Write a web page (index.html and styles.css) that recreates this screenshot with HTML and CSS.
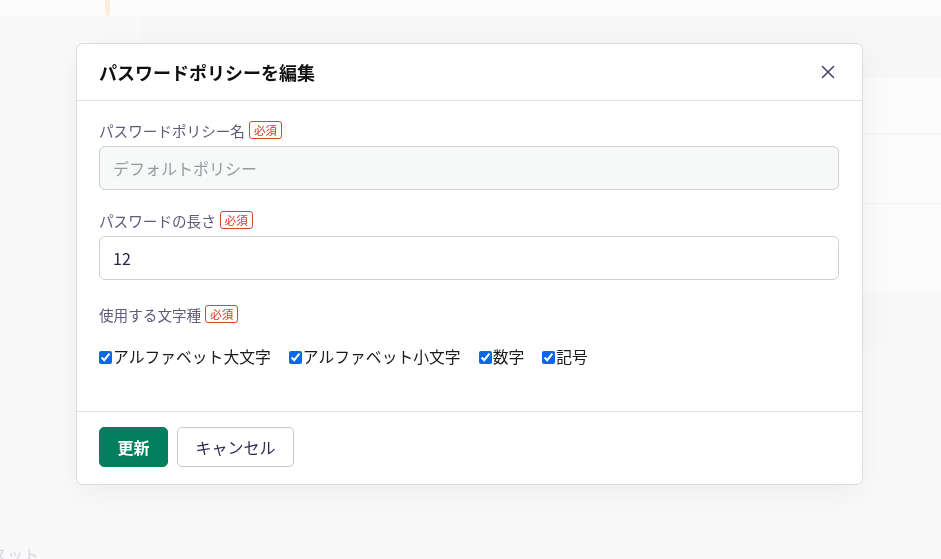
FILE: index.html
```html
<!DOCTYPE html>
<html lang="ja">
<head>
    <meta charset="UTF-8">
    <meta name="viewport" content="width=device-width, initial-scale=1.0">
    <title>パスワードポリシーを編集</title>
    <link rel="stylesheet" href="styles.css">
</head>
<body>
    <div class="page">
        <div class="notice"><span class="notice-bar"></span></div>
        <div class="table">
            <div class="table-head"></div>
            <div class="table-row"></div>
            <div class="table-row"></div>
            <div class="table-row tall"></div>
            <div class="table-foot"></div>
        </div>
        <div class="side-link"><span>スット</span></div>
    </div>

    <div class="overlay">
        <div class="modal">
            <div class="modal-header">
                <h2>パスワードポリシーを編集</h2>
                <button class="close" aria-label="閉じる">
                    <svg width="14" height="14" viewBox="0 0 14 14">
                        <path d="M1.5 1.5 L12.5 12.5 M12.5 1.5 L1.5 12.5" stroke="#4a4870" stroke-width="1.6" stroke-linecap="round"/>
                    </svg>
                </button>
            </div>

            <div class="modal-body">
                <div class="field">
                    <label class="field-label" for="name">パスワードポリシー名<span class="required">必須</span></label>
                    <input type="text" id="name" class="input" placeholder="デフォルトポリシー" disabled>
                </div>

                <div class="field">
                    <label class="field-label" for="length">パスワードの長さ<span class="required">必須</span></label>
                    <input type="text" id="length" class="input" value="12">
                </div>

                <div class="field last">
                    <div class="field-label">使用する文字種<span class="required">必須</span></div>
                    <div class="checks">
                        <label class="check"><input type="checkbox" checked>アルファベット大文字</label>
                        <label class="check"><input type="checkbox" checked>アルファベット小文字</label>
                        <label class="check"><input type="checkbox" checked>数字</label>
                        <label class="check"><input type="checkbox" checked>記号</label>
                    </div>
                </div>
            </div>

            <div class="modal-footer">
                <button class="btn btn-primary">更新</button>
                <button class="btn btn-secondary">キャンセル</button>
            </div>
        </div>
    </div>
</body>
</html>
```

FILE: styles.css
```css
body {
    font-family: "Noto Sans CJK JP", "Noto Sans", sans-serif;
    background-color: #fafafa;
    color: #1a1a1a;
    margin: 0;
    padding: 0;
    overflow: hidden;
}
.page {
    height: 559px;
    display: flex;
    flex-direction: column;
}
.notice {
    height: 16px;
    background: #fefefe;
    padding-left: 105px;
    display: flex;
}
.notice-bar {
    width: 5px;
    background: #fdebcf;
    border-radius: 0 0 3px 3px;
}
.table {
    margin-left: 140px;
    display: flex;
    flex-direction: column;
}
.table-head {
    height: 62px;
    background: #f7f7f7;
}
.table-row {
    height: 55px;
    background: #fcfcfc;
    border-bottom: 1px solid #f1f1f1;
}
.table-row + .table-row {
    height: 69px;
}
.table-row.tall {
    height: 87px;
    border-bottom: none;
}
.table-foot {
    height: 60px;
    background: #f8f8f8;
}
.side-link {
    margin-top: auto;
    height: 16px;
    overflow: hidden;
    font-size: 16px;
    line-height: 22px;
    color: #cdc9dc;
}
.side-link span {
    display: block;
    margin-left: -9px;
}
.overlay {
    position: fixed;
    inset: 0;
    background: rgba(250, 250, 250, 0.3);
    padding: 43px 0 0 76px;
}
.modal {
    width: 785px;
    background: #ffffff;
    border: 1px solid #dcdce0;
    border-radius: 7px;
    box-shadow: 0 8px 32px rgba(0, 0, 0, 0.05);
}
.modal-header {
    height: 56px;
    display: flex;
    align-items: center;
    justify-content: space-between;
    padding: 0 22px;
    border-bottom: 1px solid #e2e2e8;
}
.modal-header h2 {
    margin: 0;
    font-size: 18px;
    font-weight: bold;
    color: #111;
}
.close {
    background: none;
    border: none;
    padding: 0;
    margin-right: 5px;
    display: flex;
    cursor: pointer;
}
.modal-body {
    padding: 19px 23px 44px 22px;
}
.field {
    margin-bottom: 20px;
}
.field.last {
    margin-top: 24px;
    margin-bottom: 0;
}
.field-label {
    display: flex;
    align-items: center;
    gap: 4px;
    height: 20px;
    margin-bottom: 6px;
    font-size: 14.6px;
    color: #5e5b7a;
}
.required {
    font-size: 11.5px;
    line-height: 16px;
    color: #d2381f;
    border: 1px solid #d8442e;
    border-radius: 3px;
    padding: 0 4px;
}
.input {
    box-sizing: border-box;
    width: 740px;
    height: 44px;
    padding: 0 13px;
    border: 1px solid #cfcfd4;
    border-radius: 6px;
    font-family: inherit;
    font-size: 16px;
    color: #26244a;
    background: #ffffff;
}
.input:disabled {
    background: #f7f8f8;
}
.input::placeholder {
    color: #999aa0;
}
.checks {
    display: flex;
    gap: 18px;
    margin-top: 23px;
}
.check {
    display: flex;
    align-items: center;
    gap: 1px;
    font-size: 15.8px;
    line-height: 20px;
    color: #1a1a1a;
}
.check input {
    margin: 0;
    width: 13px;
    height: 13px;
    accent-color: #0b68e8;
}
.modal-footer {
    display: flex;
    gap: 9px;
    padding: 15px 22px 17px;
    border-top: 1px solid #e2e2e8;
}
.btn {
    height: 40px;
    border-radius: 5px;
    font-family: inherit;
    font-size: 16px;
    padding: 0 17px;
    cursor: pointer;
}
.btn-primary {
    background: #017f5f;
    border: 1px solid #017f5f;
    color: #ffffff;
    font-weight: bold;
    width: 69px;
}
.btn-secondary {
    background: #ffffff;
    border: 1px solid #c7c7cd;
    color: #2c2a4e;
    width: 117px;
}
```
